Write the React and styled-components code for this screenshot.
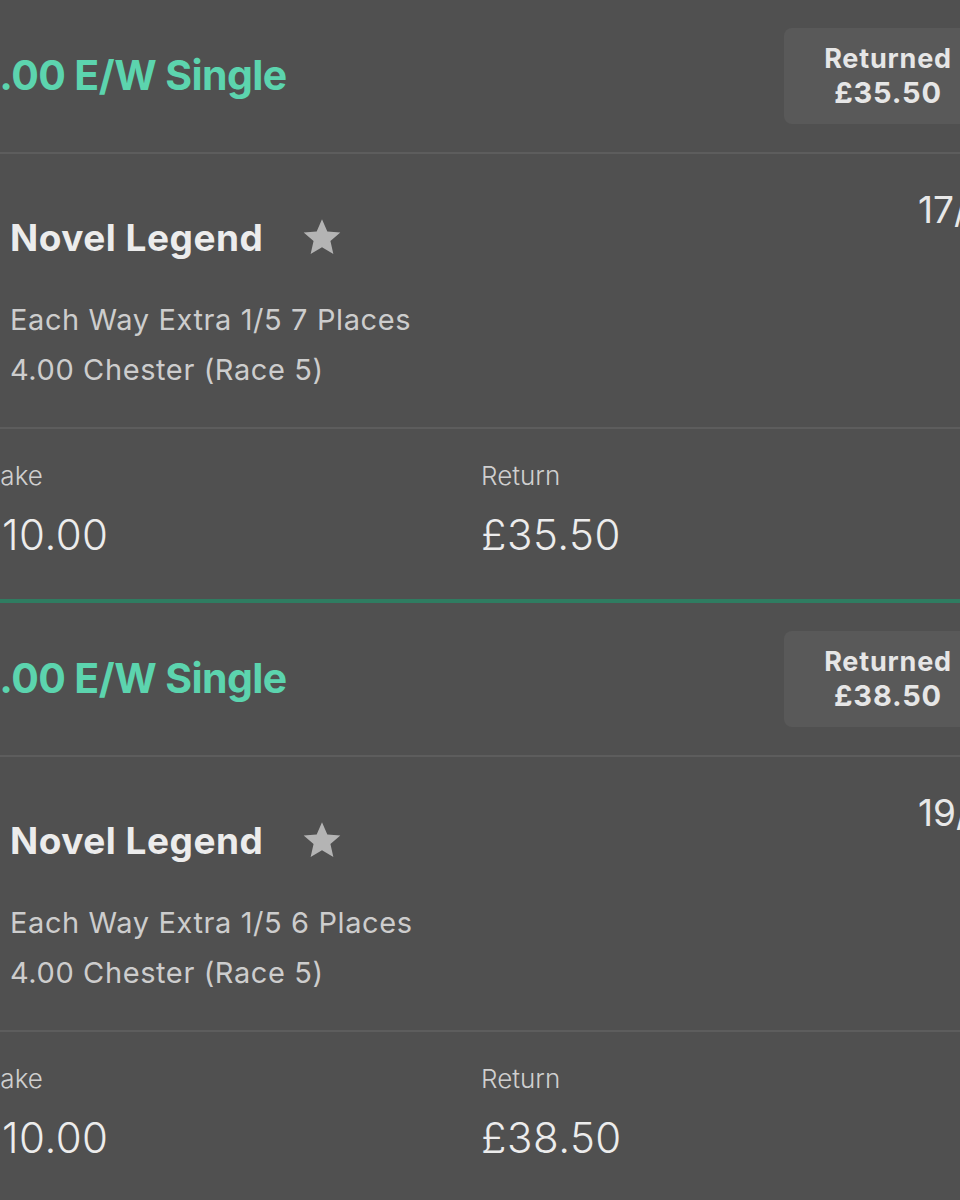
import React from "react";
import styled, { createGlobalStyle } from "styled-components";

const GlobalStyle = createGlobalStyle`
    html, body {
        margin: 0;
        padding: 0;
        background: #505050;
    }
    body {
        font-family: Inter, "Noto Sans", "Liberation Sans", sans-serif;
    }
`;

const Frame = styled.div`
    width: 960px;
    height: 1200px;
    overflow: hidden;
    background: #505050;
`;

// the screenshot is a crop of a wider slip, so the track hangs off both sides
const Track = styled.div`
    margin-left: -60px;
    width: 1080px;
`;

const Bet = styled.section`
    display: flex;
    flex-direction: column;
    border-bottom: 4px solid #2f7c61;
`;

const Header = styled.div`
    display: flex;
    align-items: center;
    justify-content: space-between;
    height: 152px;
    padding-left: 9px;
    padding-right: 28px;
    border-bottom: 2px solid #5d5d5d;
`;

const Title = styled.h2`
    margin: 0 0 3px;
    font-size: 41px;
    font-weight: 700;
    color: #5cd4ae;
    letter-spacing: -0.6px;
`;

const Badge = styled.div`
    display: flex;
    flex-direction: column;
    align-items: center;
    justify-content: center;
    width: 208px;
    height: 96px;
    border-radius: 8px;
    background: #595959;
    color: #e6e6e6;
    font-weight: 700;
    line-height: 34px;
`;

const BadgeLabel = styled.span`
    font-size: 27px;
    letter-spacing: 0.8px;
`;

const BadgeValue = styled.span`
    font-size: 29px;
    letter-spacing: 0.8px;
`;

const Selection = styled.div`
    display: flex;
    justify-content: space-between;
    height: 275px;
    box-sizing: border-box;
    padding-left: 70px;
    padding-top: 62px;
    border-bottom: 2px solid #5d5d5d;
`;

const Details = styled.div`
    display: flex;
    flex-direction: column;
`;

const NameRow = styled.div`
    display: flex;
    align-items: center;
    gap: 37px;
    margin-bottom: 35px;
`;

const Name = styled.span`
    font-size: 37px;
    font-weight: 700;
    color: #ececec;
    line-height: 44px;
    letter-spacing: 0.5px;
`;

const Market = styled.span`
    font-size: 29px;
    color: #cdcdcd;
    line-height: 50px;
    letter-spacing: 0.6px;
`;

const Odds = styled.span`
    width: 102px;
    margin-top: -28px;
    font-size: 37px;
    font-weight: 400;
    color: #e8e8e8;
    line-height: 44px;
`;

const Totals = styled.div`
    display: grid;
    grid-template-columns: 505px 1fr;
    height: 170px;
    box-sizing: border-box;
    padding-left: 36px;
    padding-top: 31px;
`;

const Cell = styled.div`
    display: flex;
    flex-direction: column;
    gap: 17px;
`;

const Label = styled.span`
    font-size: 26px;
    font-weight: 300;
    color: #cfcfcf;
    line-height: 32px;
`;

const Value = styled.span`
    font-size: 42px;
    font-weight: 300;
    color: #ececec;
    line-height: 52px;
    letter-spacing: 0.5px;
`;

const Star = () => (
    <svg width="44" height="44" viewBox="0 0 24 24">
        <path
            fill="#b4b4b4"
            d="M12 1.8l2.9 6.6 7.1.6-5.4 4.7 1.6 7-6.2-3.7-6.2 3.7 1.6-7L2 9l7.1-.6z"
        />
    </svg>
);

const bets = [
    { id: 1, returned: "£35.50", odds: "17/2", places: 7 },
    { id: 2, returned: "£38.50", odds: "19/2", places: 6 },
];

const App = () => {
    return (
        <Frame>
            <GlobalStyle />
            <Track>
                {bets.map((bet) => (
                    <Bet key={bet.id}>
                        <Header>
                            <Title>£5.00 E/W Single</Title>
                            <Badge>
                                <BadgeLabel>Returned</BadgeLabel>
                                <BadgeValue>{bet.returned}</BadgeValue>
                            </Badge>
                        </Header>
                        <Selection>
                            <Details>
                                <NameRow>
                                    <Name>Novel Legend</Name>
                                    <Star />
                                </NameRow>
                                <Market>Each Way Extra 1/5 {bet.places} Places</Market>
                                <Market>4.00 Chester (Race 5)</Market>
                            </Details>
                            <Odds>{bet.odds}</Odds>
                        </Selection>
                        <Totals>
                            <Cell>
                                <Label>Stake</Label>
                                <Value>£10.00</Value>
                            </Cell>
                            <Cell>
                                <Label>Return</Label>
                                <Value>{bet.returned}</Value>
                            </Cell>
                        </Totals>
                    </Bet>
                ))}
            </Track>
        </Frame>
    );
};

export default App;
